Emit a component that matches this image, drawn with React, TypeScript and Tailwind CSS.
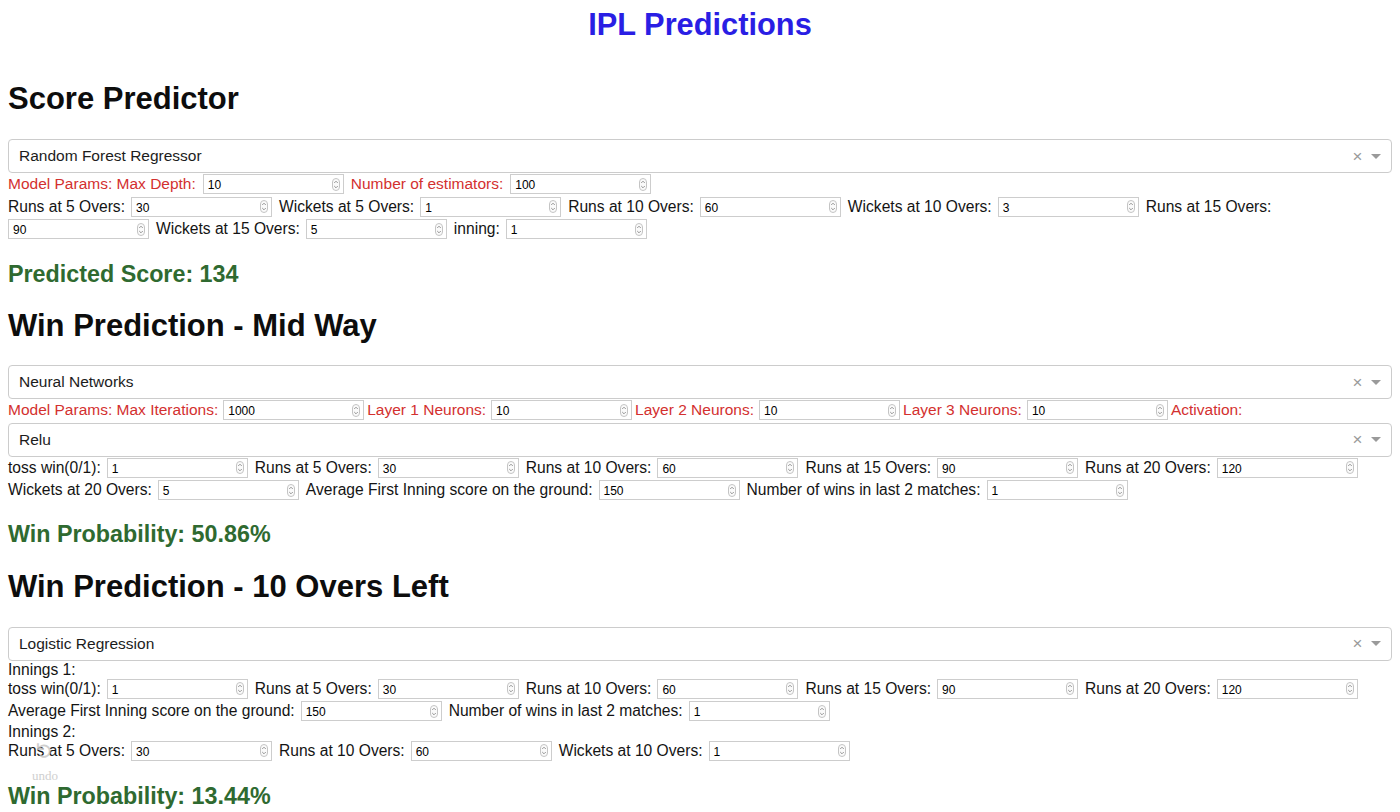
import React from "react";

function Spinner() {
  return (
    <svg width="8" height="13" viewBox="0 0 8 13" className="shrink-0">
      <rect x="0.5" y="0.5" width="7" height="12" rx="3.5" fill="#fafafa" stroke="#c4c4c4" />
      <path d="M2.2 5 L4 3.2 L5.8 5" stroke="#8a8a8a" strokeWidth="0.9" fill="none" />
      <path d="M2.2 8 L4 9.8 L5.8 8" stroke="#8a8a8a" strokeWidth="0.9" fill="none" />
    </svg>
  );
}

function NumInput({ value, mr }: { value: string; mr: string }) {
  return (
    <span
      className={`inline-flex items-center w-[141px] h-[20px] border border-[#cdcdcd] bg-white pl-[4px] pr-[3px] text-[12px] text-black ${mr}`}
    >
      <span className="flex-1 leading-none pt-[2px]">{value}</span>
      <Spinner />
    </span>
  );
}

type F = [string, string | null];

function Row({
  fields,
  red,
  labelMr = "mr-[6px]",
  inputMr = "mr-[7px]",
}: {
  fields: F[];
  red?: boolean;
  labelMr?: string;
  inputMr?: string;
}) {
  return (
    <div className="flex flex-wrap items-center gap-y-[2.5px] py-[1.25px]">
      {fields.map(([l, v], i) => (
        <React.Fragment key={i}>
          <span
            className={`h-[20px] leading-[20px] ${labelMr} ${
              red ? "text-[15.5px] text-[#d3302f]" : "text-[15.6px]"
            }`}
          >
            {l}
          </span>
          {v !== null && <NumInput value={v} mr={inputMr} />}
        </React.Fragment>
      ))}
    </div>
  );
}

function Select({ value, className = "" }: { value: string; className?: string }) {
  return (
    <div className={`flex items-center h-[34px] border border-[#cccccc] rounded-[4px] bg-white ${className}`}>
      <span className="flex-1 pl-[10px] text-[15.5px] text-[#1c1c1c]">{value}</span>
      <span className="w-[17px] text-center text-[17px] leading-none text-[#9a9a9a]">×</span>
      <span className="w-[25px] pr-[5px] flex justify-center">
        <span className="w-0 h-0 border-x-[5px] border-x-transparent border-t-[5px] border-t-[#9a9a9a]" />
      </span>
    </div>
  );
}

function H2({ children, className = "" }: { children: React.ReactNode; className?: string }) {
  return <h2 className={`text-[31px] font-bold leading-[36px] text-[#0d0d0d] ${className}`}>{children}</h2>;
}

function H3({ children, className = "" }: { children: React.ReactNode; className?: string }) {
  return <h3 className={`text-[23.3px] font-bold leading-[27px] text-[#2f6a30] ${className}`}>{children}</h3>;
}

export default function App() {
  return (
    <div className="relative min-h-[812px] bg-white px-[8px] text-[15.4px] text-[#141414] font-['Liberation_Sans',Arial,sans-serif]">
      <h1 className="pt-[6.5px] text-center text-[30.8px] font-bold leading-[35px] text-[#2a1ee4]">IPL Predictions</h1>

      <H2 className="mt-[39.5px]">Score Predictor</H2>
      <Select value="Random Forest Regressor" className="mt-[22px]" />
      <Row
        red
        labelMr="mr-[7px]"
        inputMr="mr-[7px]"
        fields={[["Model Params: Max Depth:", "10"], ["Number of estimators:", "100"]]}
      />
      <Row
        fields={[
          ["Runs at 5 Overs:", "30"],
          ["Wickets at 5 Overs:", "1"],
          ["Runs at 10 Overs:", "60"],
          ["Wickets at 10 Overs:", "3"],
          ["Runs at 15 Overs:", "90"],
          ["Wickets at 15 Overs:", "5"],
          ["inning:", "1"],
        ]}
      />
      <H3 className="mt-[20px]">Predicted Score: 134</H3>

      <H2 className="mt-[20.5px]">Win Prediction - Mid Way</H2>
      <Select value="Neural Networks" className="mt-[21px]" />
      <Row
        red
        labelMr="mr-[5px]"
        inputMr="mr-[3px]"
        fields={[
          ["Model Params: Max Iterations:", "1000"],
          ["Layer 1 Neurons:", "10"],
          ["Layer 2 Neurons:", "10"],
          ["Layer 3 Neurons:", "10"],
          ["Activation:", null],
        ]}
      />
      <Select value="Relu" className="mt-[1px]" />
      <Row
        fields={[
          ["toss win(0/1):", "1"],
          ["Runs at 5 Overs:", "30"],
          ["Runs at 10 Overs:", "60"],
          ["Runs at 15 Overs:", "90"],
          ["Runs at 20 Overs:", "120"],
          ["Wickets at 20 Overs:", "5"],
          ["Average First Inning score on the ground:", "150"],
          ["Number of wins in last 2 matches:", "1"],
        ]}
      />
      <H3 className="mt-[19.5px]">Win Probability: 50.86%</H3>

      <H2 className="mt-[20.5px]">Win Prediction - 10 Overs Left</H2>
      <Select value="Logistic Regression" className="mt-[22px]" />
      <div className="leading-[17px] text-[15.6px]">Innings 1:</div>
      <Row
        fields={[
          ["toss win(0/1):", "1"],
          ["Runs at 5 Overs:", "30"],
          ["Runs at 10 Overs:", "60"],
          ["Runs at 15 Overs:", "90"],
          ["Runs at 20 Overs:", "120"],
        ]}
      />
      <Row
        fields={[
          ["Average First Inning score on the ground:", "150"],
          ["Number of wins in last 2 matches:", "1"],
        ]}
      />
      <div className="leading-[17px] text-[15.6px]">Innings 2:</div>
      <Row
        fields={[
          ["Runs at 5 Overs:", "30"],
          ["Runs at 10 Overs:", "60"],
          ["Wickets at 10 Overs:", "1"],
        ]}
      />
      <H3 className="mt-[21px]">Win Probability: 13.44%</H3>

      <div className="absolute left-[30px] top-[740px] w-[30px] flex flex-col items-center text-[#c4c4c4] font-['Liberation_Serif',serif] opacity-80">
        <div className="text-[22px] leading-[22px] rotate-[270deg]">↺</div>
        <div className="mt-[6px] text-[13px] leading-[15px]">undo</div>
      </div>
    </div>
  );
}
